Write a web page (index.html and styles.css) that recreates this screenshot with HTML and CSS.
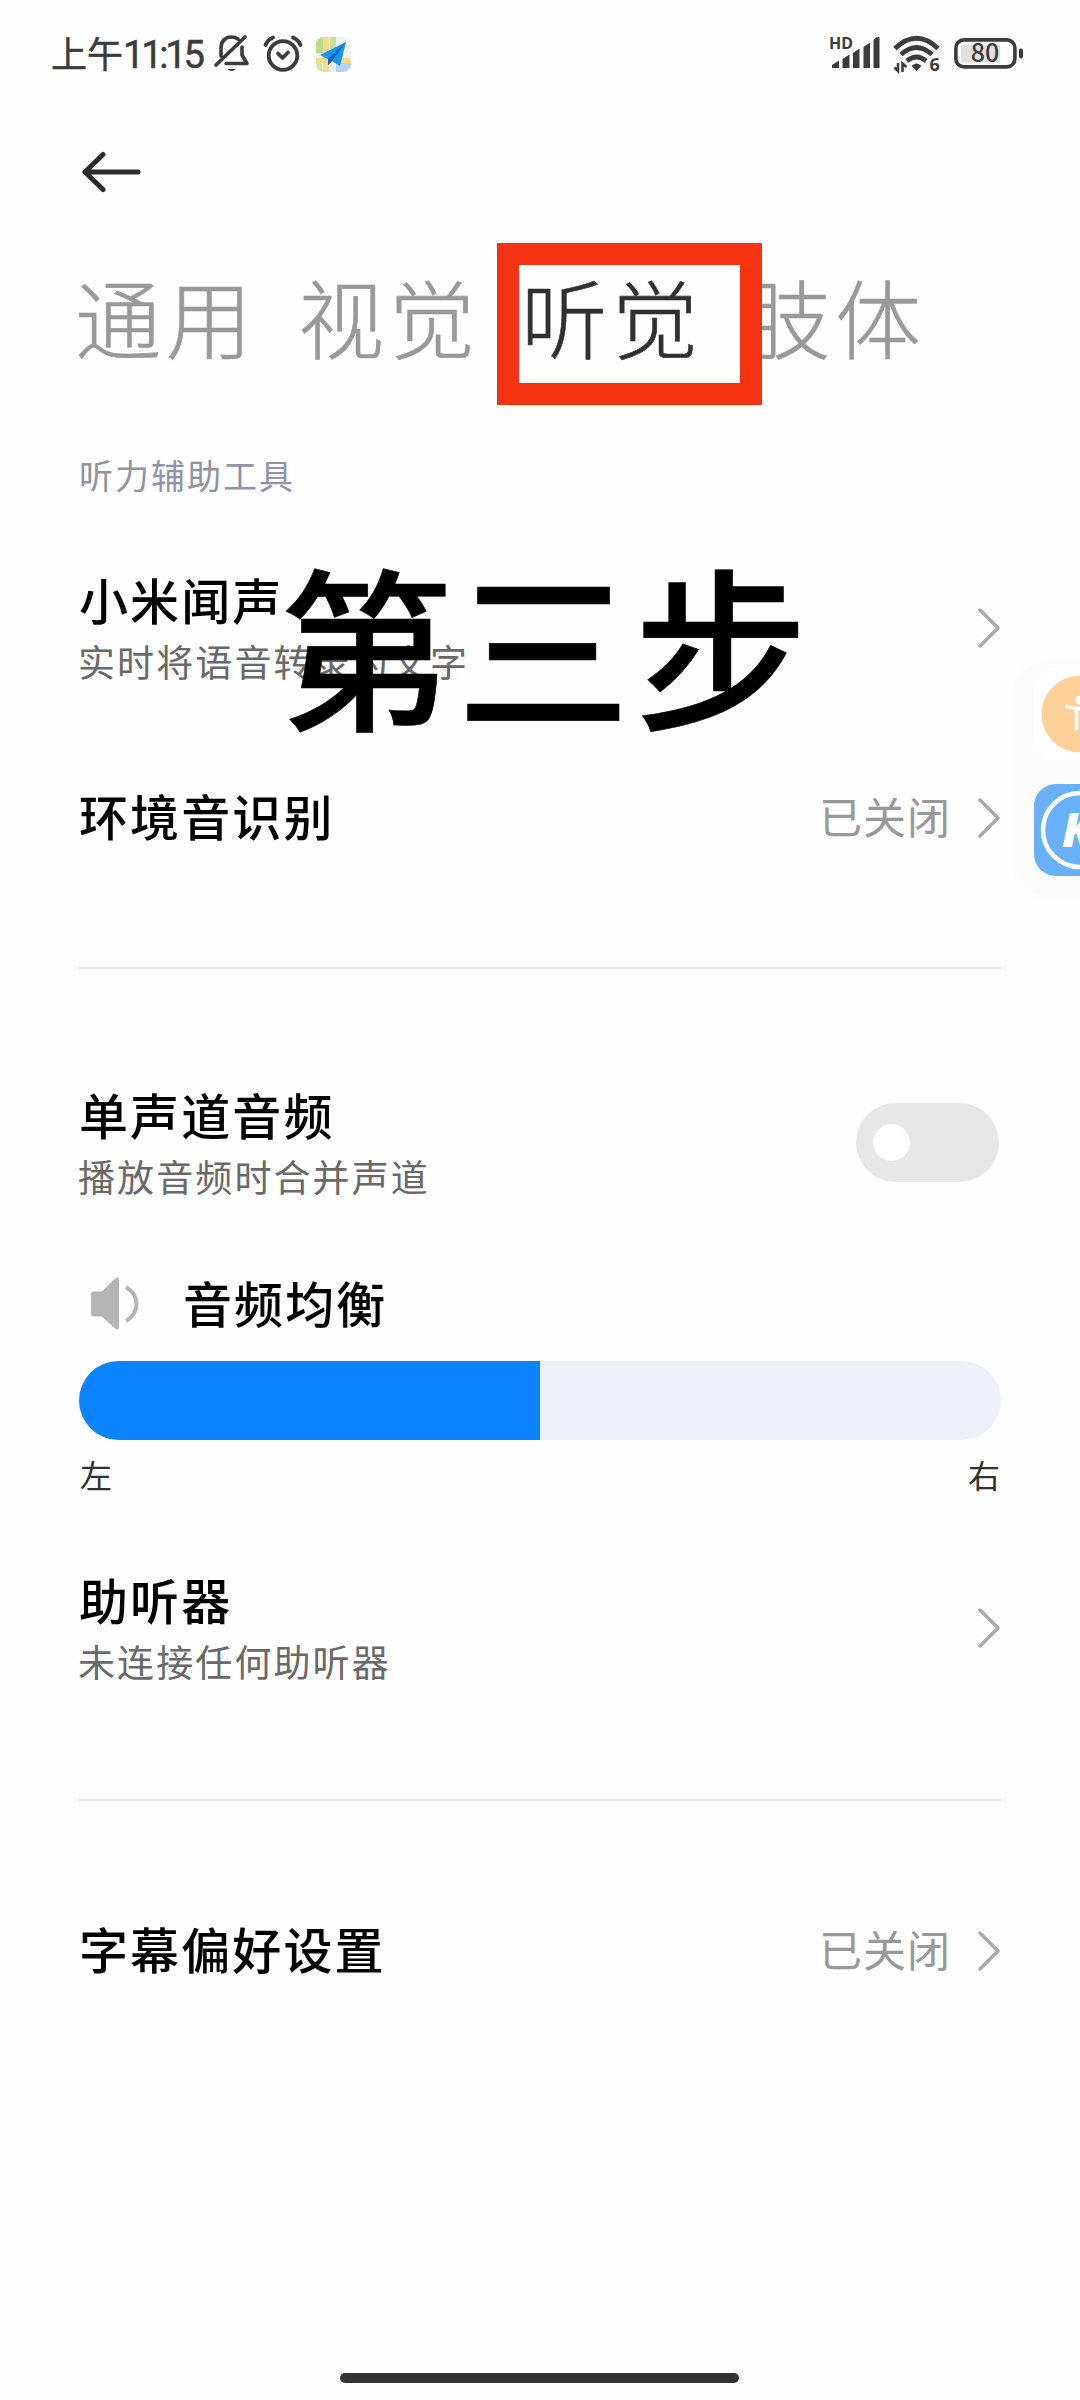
FILE: index.html
```html
<!DOCTYPE html>
<html lang="zh-CN">
<head>
<meta charset="utf-8">
<title>听觉</title>
<link rel="stylesheet" href="styles.css">
</head>
<body>
<div class="screen">
  <header class="status">
    <div class="status-left">
      <span class="clock">上午<span class="digits">11:15</span></span>
      <svg class="ic-bell" width="36" height="40" viewBox="0 0 36 40" fill="none" stroke="#3c3c3c" stroke-width="3.6" stroke-linecap="round" stroke-linejoin="round"><path d="M7 22V14C7 7 11.500 3 17.500 3C20 3 22 3.600 24 5M28 13V21L33 29.500H12M2 31L31 3"/><path d="M13 35H22Q17.500 39 13 35Z" fill="#3c3c3c" stroke="none"/></svg>
      <svg class="ic-alarm" width="40" height="40" viewBox="0 0 40 40" fill="none" stroke="#3c3c3c" stroke-width="3.800" stroke-linecap="round" stroke-linejoin="round"><circle cx="20" cy="21.500" r="14.300"/><path d="M15 19.500L19.500 24L25 18.500M2.500 11Q4.500 6 10 3.500M37.500 11Q35.500 6 30 3.500"/></svg>
      <svg class="ic-map" width="35" height="35" viewBox="0 0 35 35"><defs><clipPath id="map"><rect width="35" height="35" rx="8"/></clipPath></defs><g clip-path="url(#map)"><rect width="35" height="35" fill="#eef3f1"/><path d="M0 0H8V16H0Z" fill="#b9de86"/><path d="M14 0H20V12H14Z" fill="#c2e297"/><path d="M0 22H6V35H0Z" fill="#cfe9ad"/><path d="M20 26H35V35H20Z" fill="#b3d3fa"/><path d="M7 0H13V35H7ZM0 21H35V26H0Z" fill="#fbd98b"/></g><path d="M30 5L4 18L12 22V28L16 24L24 29Z" fill="#1595f5"/><path d="M30 5L12 22V28L16 24Z" fill="#0b62b8"/></svg>
    </div>
    <div class="status-right">
      <svg width="50" height="36" viewBox="0 0 50 36" fill="#3c3c3c"><text x="-1" y="13" class="hd">HD</text><path d="M2 32V29L9 24.500V32ZM12.500 32V23L19.500 18.500V32ZM23 32V17L29.500 12.500V32ZM33.500 32V11L40 6.500V32ZM43.500 32V5Q43.500 2.500 46 1.500L49.500 .8V32Z"/></svg>
      <svg width="48" height="38" viewBox="0 0 48 38"><g fill="none" stroke="#3c3c3c" stroke-width="4.800"><path d="M2 13.500Q23.500 -7 45 13.500M8 19.500Q23.500 5.500 39 19.500M14 26Q23.500 18 33 26"/></g><path d="M18.500 31Q23.500 26 28.500 31L23.500 36Z" fill="#3c3c3c"/><path d="M5 28V36L1.500 32.500M9.500 37V28.500L13.500 32" fill="none" stroke="#3c3c3c" stroke-width="2.600"/><text x="36.500" y="36" class="wifi6">6</text></svg>
      <svg width="70" height="32" viewBox="0 0 70 32"><rect x="1.900" y="1.900" width="59" height="27" rx="8" fill="#fff" stroke="#3c3c3c" stroke-width="3.600"/><rect x="7" y="6.500" width="39" height="18" fill="#e1e1e1"/><rect x="65" y="10.500" width="4" height="10" rx="2" fill="#3c3c3c"/><text x="31" y="24" text-anchor="middle" class="batt">80</text></svg>
    </div>
  </header>

  <div class="back"><svg width="60" height="42" viewBox="0 0 60 42" fill="none" stroke="#2b2b2b" stroke-width="5" stroke-linecap="round" stroke-linejoin="round"><path d="M56 21H3M21 3.500L3 21L21 38.500"/></svg></div>

  <nav class="tabs">
    <span>通用</span><span>视觉</span><span class="active">听觉</span><span>肢体</span>
  </nav>
  <h2 class="group">听力辅助工具</h2>

  <div class="row">
    <div class="texts"><div class="title">小米闻声</div><div class="sub">实时将语音转录为文字</div></div>
    <svg class="chev" viewBox="0 0 22 40"><path d="M2 2L20 20L2 38"/></svg>
  </div>
  <div class="row single env">
    <div class="title">环境音识别</div>
    <div class="value">已关闭</div>
    <svg class="chev" viewBox="0 0 22 40"><path d="M2 2L20 20L2 38"/></svg>
  </div>
  <hr>
  <div class="row mono">
    <div class="texts"><div class="title">单声道音频</div><div class="sub">播放音频时合并声道</div></div>
    <div class="toggle"><i></i></div>
  </div>
  <div class="balance">
    <svg width="48" height="54" viewBox="0 0 48 54"><path d="M2 14.500H11L24 1.500Q28 -1 28 3V50Q28 54 24 51.500L11 39.500H2Q0 39.500 0 37V17Q0 14.500 2 14.500Z" fill="#b5b5b5"/><path d="M35 10Q45.500 16.500 45.500 27T35 44" fill="none" stroke="#b5b5b5" stroke-width="4"/></svg>
    <div class="title">音频均衡</div>
  </div>
  <div class="slider"><div class="fill"></div></div>
  <div class="ends"><span>左</span><span>右</span></div>
  <div class="row aid">
    <div class="texts"><div class="title">助听器</div><div class="sub">未连接任何助听器</div></div>
    <svg class="chev" viewBox="0 0 22 40"><path d="M2 2L20 20L2 38"/></svg>
  </div>
  <hr class="second">
  <div class="row single caption">
    <div class="title">字幕偏好设置</div>
    <div class="value">已关闭</div>
    <svg class="chev" viewBox="0 0 22 40"><path d="M2 2L20 20L2 38"/></svg>
  </div>

  <div class="frame"></div>
  <div class="step">第三步</div>
  <aside class="dock">
    <div class="app access"><svg width="92" height="92" viewBox="0 0 92 92"><circle cx="46" cy="46" r="38.500" fill="#ffd199"/><circle cx="46" cy="32" r="4.500" fill="#fff"/><path d="M31 38.500L46 41L61 38.500M42.500 40V62M49.500 40V62" stroke="#fff" stroke-width="3.500" fill="none"/></svg></div>
    <div class="app music"><svg width="92" height="92" viewBox="0 0 92 92"><circle cx="46" cy="46" r="37" fill="none" stroke="#fff" stroke-width="4.500"/><text x="28" y="63" class="k">K</text></svg></div>
  </aside>
  <div class="home"></div>
</div>
</body>
</html>
```
FILE: styles.css
```css
* { box-sizing: border-box; }
body { margin: 0; background: #fefefe; font-family: "Noto Sans CJK SC", sans-serif; color: #000; }
.screen { position: relative; width: 1080px; height: 2400px; overflow: hidden; padding: 0 79px; }
.status { height: 108px; margin: 0 -29px; display: flex; align-items: center; justify-content: space-between; }
.status svg { overflow: visible; }
.status-left { display: flex; align-items: center; }
.clock { font-size: 36px; font-weight: 400; color: #3c3c3c; white-space: nowrap; width: 164px; line-height: 50px; padding: 0 0 2px 1px; -webkit-text-stroke: .5px #3c3c3c; }
.digits { font-family: Roboto, sans-serif; font-size: 38px; letter-spacing: -3.200px; }
.ic-alarm { margin-left: 13px; }
.ic-map { margin-left: 13px; }
.status-right { display: flex; align-items: center; margin-right: 6px; }
.status-right svg { margin-left: 13px; }
.hd { font: 700 16px "Noto Sans", sans-serif; }
.wifi6 { font: 700 18px "Noto Sans", sans-serif; fill: #3c3c3c; }
.batt { font: 500 25px "Noto Sans CJK SC", sans-serif; fill: #3c3c3c; }
.back { height: 128px; display: flex; align-items: center; padding-left: 3px; }
.tabs { height: 160px; display: flex; align-items: center; gap: 41px; margin-left: -4px; font-size: 86px; font-weight: 300; letter-spacing: 5px; color: #999; white-space: nowrap; line-height: 120px; -webkit-text-stroke: .6px currentColor; }
.tabs .active { color: #303030; }
.group { margin: 0; height: 156px; line-height: 157px; font-size: 34px; font-weight: 400; letter-spacing: 2px; color: #9093a3; }
.row { height: 152px; display: flex; align-items: center; }
.texts { flex: 1; padding-top: 1px; }
.title { font-size: 49px; font-weight: 500; letter-spacing: 2.100px; line-height: 64px; white-space: nowrap; }
.sub { font-size: 37px; letter-spacing: 2.100px; line-height: 60px; color: #696969; white-space: nowrap; margin-left: -1px; }
.single .title { flex: 1; padding-bottom: 6px; }
.value { font-size: 43px; letter-spacing: 1px; color: #999; padding-bottom: 6px; margin-right: 27px; }
.chev { width: 22px; height: 40px; margin-right: 1px; fill: none; stroke: #aaa; stroke-width: 3.500; stroke-linecap: round; stroke-linejoin: round; }
.env { height: 228px; }
hr { border: 0; height: 2px; background: #e5e5e5; margin: 35px 0 0; }
.mono { margin-top: 98px; }
.toggle { width: 143px; height: 79px; border-radius: 40px; background: #e7e7e7; padding: 21px 17px; margin: 0 2px 1px 0; }
.toggle i { display: block; width: 37px; height: 37px; border-radius: 50%; background: #fff; }
.balance { margin-top: 28px; height: 114px; display: flex; align-items: center; padding-left: 12px; gap: 44px; }
.balance .title { padding-bottom: 5px; }
.slider { height: 79px; border-radius: 40px; background: #edf0f9; overflow: hidden; }
.fill { width: 50%; height: 100%; background: #0d84ff; }
.ends { height: 68px; display: flex; justify-content: space-between; align-items: center; font-size: 32px; color: #303030; padding: 0 1px; }
.aid { margin-top: 44px; }
hr.second { margin-top: 95px; }
.caption { margin-top: 74px; }
.frame { position: absolute; left: 497px; top: 243px; width: 265px; height: 162px; border: 22px solid #f53313; }
.step { position: absolute; left: 279px; top: 518px; font-size: 174px; line-height: 246px; font-weight: 500; letter-spacing: 3.500px; white-space: nowrap; -webkit-text-stroke: .6px #000; }
.dock { position: absolute; left: 1013px; top: 660px; width: 134px; height: 237px; border-radius: 38px; background: #fbfbfb; box-shadow: 0 0 10px rgba(0,0,0,.02); padding: 8px 21px; display: flex; flex-direction: column; gap: 24px; }
.app { width: 92px; height: 92px; border-radius: 22px; }
.access { background: #fff; }
.music { background: #68b1f8; }
.app svg { display: block; }
.k { font: italic 800 47px "Open Sans", sans-serif; fill: #fff; }
.home { position: absolute; left: 340px; top: 2373px; width: 399px; height: 10px; border-radius: 5px; background: #333; }
```
